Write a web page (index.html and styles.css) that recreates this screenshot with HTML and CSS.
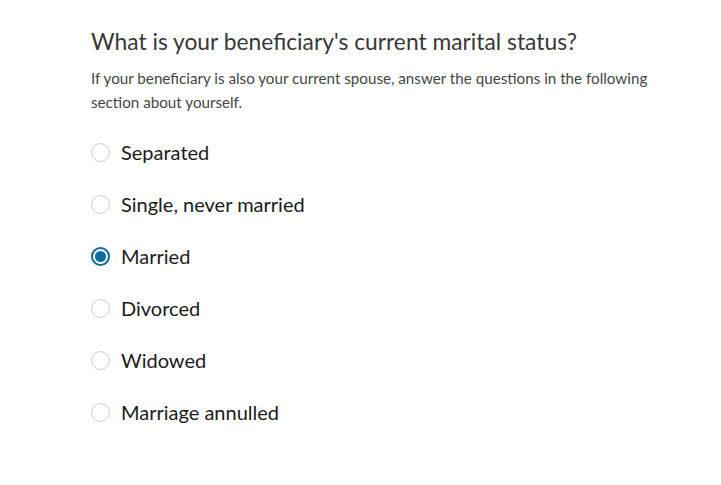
FILE: index.html
```html
<!DOCTYPE html>
<html lang="en">
<head>
<meta charset="utf-8">
<title>Marital status</title>
<link rel="stylesheet" href="styles.css">
</head>
<body>
<main class="page">
  <fieldset class="question">
    <legend class="question-title">What is your beneficiary's current marital status?</legend>
    <p class="question-hint">If your beneficiary is also your current spouse, answer the questions in the following section about yourself.</p>
    <div class="options">
      <label class="option"><input type="radio" name="ms" class="radio"><span class="option-label">Separated</span></label>
      <label class="option"><input type="radio" name="ms" class="radio"><span class="option-label">Single, never married</span></label>
      <label class="option"><input type="radio" name="ms" class="radio" checked><span class="option-label">Married</span></label>
      <label class="option"><input type="radio" name="ms" class="radio"><span class="option-label">Divorced</span></label>
      <label class="option"><input type="radio" name="ms" class="radio"><span class="option-label">Widowed</span></label>
      <label class="option"><input type="radio" name="ms" class="radio"><span class="option-label">Marriage annulled</span></label>
    </div>
  </fieldset>
</main>
</body>
</html>
```
FILE: styles.css
```css
html, body {
  margin: 0;
  padding: 0;
  background: #ffffff;
}
body {
  font-family: "Lato", "Open Sans", sans-serif;
}
.page {
  padding: 26px 0 0 91px;
}
.question {
  border: 0;
  margin: 0;
  padding: 0;
  min-width: 0;
}
.question-title {
  padding: 0;
  font-size: 22.8px;
  line-height: 30px;
  font-weight: 400;
  color: #383838;
}
.question-hint {
  margin: 10px 0 0 0;
  width: 590px;
  font-size: 15.2px;
  line-height: 24px;
  color: #454545;
}
.options {
  display: flex;
  flex-direction: column;
  gap: 26px;
  margin-top: 25px;
}
.option {
  display: flex;
  align-items: center;
  gap: 11px;
  height: 26px;
  cursor: pointer;
}
.radio {
  appearance: none;
  -webkit-appearance: none;
  margin: 0;
  width: 19px;
  height: 19px;
  border: 1px solid #cfcfcf;
  border-radius: 50%;
  background: #fff;
  box-sizing: border-box;
  flex: none;
  display: grid;
  place-content: center;
}
.radio:checked {
  border: 2px solid #0b6ba0;
}
.radio:checked::before {
  content: "";
  width: 11px;
  height: 11px;
  border-radius: 50%;
  background: #0b6ba0;
}
.option-label {
  font-size: 20px;
  color: #1b1b1b;
}
```
